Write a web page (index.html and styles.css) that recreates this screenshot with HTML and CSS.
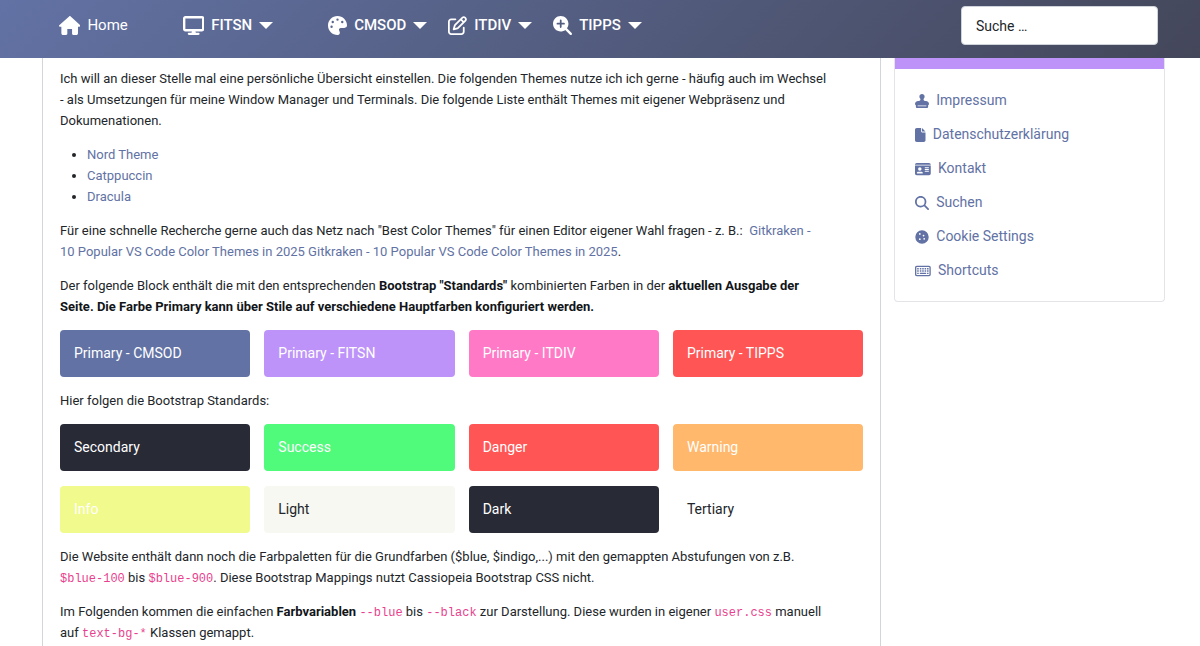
FILE: index.html
```html
<!DOCTYPE html>
<html lang="de">

<head>
    <meta charset="utf-8">
    <meta name="viewport" content="width=device-width, initial-scale=1">
    <title>Color Themes</title>
    <link rel="stylesheet" href="styles.css">
</head>

<body>

    <!-- header start -->
    <header class="header">
        <nav class="nav">
            <a class="nav-item home" href="#">
                <svg class="icon" viewBox="0 0 576 512"><path d="M288 0L6 246c-14 14-4 42 18 42h40v176c0 27 21 48 48 48h80c18 0 32-14 32-32V352h128v128c0 18 14 32 32 32h80c27 0 48-21 48-48V288h40c22 0 32-28 18-42L308 8c-12-11-28-11-40 0z"/></svg>
                Home
            </a>
            <button class="nav-item" type="button">
                <svg class="icon" viewBox="0 0 576 512"><path fill-rule="evenodd" d="M64 0C28.700 0 0 28.700 0 64v288c0 35.300 28.700 64 64 64h176l-10.700 32H160c-17.700 0-32 14.300-32 32s14.300 32 32 32h256c17.700 0 32-14.300 32-32s-14.300-32-32-32h-69.300L336 416h176c35.300 0 64-28.700 64-64V64c0-35.300-28.700-64-64-64H64zm448 64v288H64V64h448z"/></svg>
                FITSN
                <svg class="caret" viewBox="0 0 14 7"><path d="M0 0h14L7 7z"/></svg>
            </button>
            <div class="nav-group">
                <button class="nav-item" type="button">
                    <svg class="icon" viewBox="0 0 512 512"><path fill-rule="evenodd" d="M512 256v2.700c-.4 36.500-33.600 61.300-70.100 61.300H344c-26.500 0-48 21.500-48 48 0 3.400.4 6.700 1 9.900 2.100 10.200 6.500 20 10.800 29.900 6.100 13.800 12.100 27.500 12.100 42 0 31.800-21.600 60.700-53.400 62-3.500.1-7 .2-10.600.2C114.600 512 0 397.400 0 256S114.600 0 256 0s256 114.600 256 256zM128 288a32 32 0 1 0-64 0 32 32 0 1 0 64 0zm0-96a32 32 0 1 0 0-64 32 32 0 1 0 0 64zm160-96a32 32 0 1 0-64 0 32 32 0 1 0 64 0zm96 96a32 32 0 1 0 0-64 32 32 0 1 0 0 64z"/></svg>
                    CMSOD
                    <svg class="caret" viewBox="0 0 14 7"><path d="M0 0h14L7 7z"/></svg>
                </button>
                <button class="nav-item" type="button">
                    <svg class="icon" viewBox="0 0 512 512"><path d="M441 58.900L453.100 71c9.400 9.400 9.400 24.600 0 33.900L424 134.100 377.900 88 407 58.900c9.400-9.400 24.600-9.400 33.900 0zM209.800 256.200L344 121.900 390.100 168 255.800 302.200c-2.900 2.900-6.500 5-10.400 6.100l-58.500 16.700 16.700-58.500c1.100-3.900 3.200-7.500 6.100-10.400zM373.100 25L175.800 222.200c-8.700 8.700-15 19.400-18.300 31.100l-28.600 100c-2.400 8.400-.1 17.400 6.100 23.600s15.200 8.500 23.600 6.100l100-28.600c11.800-3.400 22.500-9.700 31.100-18.300L487 138.900c28.100-28.100 28.100-73.700 0-101.800L474.900 25C446.800-3.100 401.200-3.100 373.100 25zM88 64C39.400 64 0 103.400 0 152v272c0 48.600 39.400 88 88 88h272c48.600 0 88-39.400 88-88V312c0-13.300-10.700-24-24-24s-24 10.700-24 24v112c0 22.100-17.900 40-40 40H88c-22.100 0-40-17.900-40-40V152c0-22.100 17.900-40 40-40h112c13.300 0 24-10.700 24-24s-10.700-24-24-24H88z"/></svg>
                    ITDIV
                    <svg class="caret" viewBox="0 0 14 7"><path d="M0 0h14L7 7z"/></svg>
                </button>
                <button class="nav-item" type="button">
                    <svg class="icon" viewBox="0 0 512 512"><path fill-rule="evenodd" d="M416 208c0 45.900-14.900 88.300-40 122.700l126.600 126.700c12.500 12.500 12.500 32.800 0 45.300s-32.800 12.500-45.300 0L330.700 376c-34.400 25.200-76.800 40-122.700 40C93.100 416 0 322.900 0 208S93.100 0 208 0s208 93.100 208 208zM184 296c0 13.300 10.700 24 24 24s24-10.700 24-24v-64h64c13.300 0 24-10.700 24-24s-10.700-24-24-24h-64v-64c0-13.300-10.700-24-24-24s-24 10.700-24 24v64h-64c-13.300 0-24 10.700-24 24s10.700 24 24 24h64v64z"/></svg>
                    TIPPS
                    <svg class="caret" viewBox="0 0 14 7"><path d="M0 0h14L7 7z"/></svg>
                </button>
            </div>
        </nav>
        <form class="search" role="search">
            <input class="search-input" type="search" placeholder="Suche …" aria-label="Suche">
        </form>
    </header>
    <!-- header end -->

    <div class="page">
        <main class="content">
            <p>Ich will an dieser Stelle mal eine persönliche Übersicht einstellen. Die folgenden Themes nutze ich ich gerne - häufig auch im Wechsel<br>
            - als Umsetzungen für meine Window Manager und Terminals. Die folgende Liste enthält Themes mit eigener Webpräsenz und<br>
            Dokumenationen.</p>
            <ul>
                <li><a href="#">Nord Theme</a></li>
                <li><a href="#">Catppuccin</a></li>
                <li><a href="#">Dracula</a></li>
            </ul>
            <p>Für eine schnelle Recherche gerne auch das Netz nach "Best Color Themes" für einen Editor eigener Wahl fragen - z. B.:&nbsp; <a href="#">Gitkraken -<br>
            10 Popular VS Code Color Themes in 2025 Gitkraken - 10 Popular VS Code Color Themes in 2025</a>.</p>
            <p>Der folgende Block enthält die mit den entsprechenden <strong>Bootstrap "Standards"</strong> kombinierten Farben in der <strong>aktuellen Ausgabe der<br>
            Seite. Die Farbe Primary kann über Stile auf verschiedene Hauptfarben konfiguriert werden.</strong></p>

            <div class="swatches">
                <div class="swatch cmsod">Primary - CMSOD</div>
                <div class="swatch fitsn">Primary - FITSN</div>
                <div class="swatch itdiv">Primary - ITDIV</div>
                <div class="swatch tipps">Primary - TIPPS</div>
            </div>

            <p>Hier folgen die Bootstrap Standards:</p>

            <div class="swatches">
                <div class="swatch secondary">Secondary</div>
                <div class="swatch success">Success</div>
                <div class="swatch danger">Danger</div>
                <div class="swatch warning">Warning</div>
                <div class="swatch info">Info</div>
                <div class="swatch light">Light</div>
                <div class="swatch dark">Dark</div>
                <div class="swatch tertiary">Tertiary</div>
            </div>

            <p>Die Website enthält dann noch die Farbpaletten für die Grundfarben ($blue, $indigo,...) mit den gemappten Abstufungen von z.B.<br>
            <code>$blue-100</code> bis <code>$blue-900</code>. Diese Bootstrap Mappings nutzt Cassiopeia Bootstrap CSS nicht.</p>
            <p>Im Folgenden kommen die einfachen <strong>Farbvariablen</strong> <code>--blue</code> bis <code>--black</code> zur Darstellung. Diese wurden in eigener <code>user.css</code> manuell<br>
            auf <code>text-bg-*</code> Klassen gemappt.</p>
        </main>

        <aside class="card">
            <div class="card-top"></div>
            <ul class="card-menu">
                <li><a href="#">
                    <svg class="icon" viewBox="0 0 512 512"><path fill-rule="evenodd" d="M312 201.800c0-17.400 9.200-33.200 19.900-47C344.500 138.500 352 118.100 352 96c0-53-43-96-96-96s-96 43-96 96c0 22.100 7.500 42.500 20.100 58.800 10.700 13.800 19.900 29.600 19.900 47 0 29.900-24.300 54.200-54.200 54.200H112C50.100 256 0 306.100 0 368c0 20.900 13.400 38.700 32 45.300V464c0 26.500 21.500 48 48 48h352c26.500 0 48-21.500 48-48v-50.700c18.600-6.600 32-24.400 32-45.300 0-61.900-50.100-112-112-112h-33.800c-29.900 0-54.200-24.300-54.200-54.200zM416 416v32H96v-32h320z"/></svg>
                    Impressum</a></li>
                <li><a href="#">
                    <svg class="icon" viewBox="0 0 384 512"><path d="M0 64C0 28.700 28.700 0 64 0h160v128c0 17.700 14.300 32 32 32h128v288c0 35.300-28.700 64-64 64H64c-35.300 0-64-28.700-64-64V64zm384 64H256V0l128 128z"/></svg>
                    Datenschutzerklärung</a></li>
                <li><a href="#">
                    <svg class="icon" viewBox="0 0 576 512"><path fill-rule="evenodd" d="M0 96h576c0-35.300-28.700-64-64-64H64C28.700 32 0 60.700 0 96zm0 32v288c0 35.300 28.700 64 64 64h448c35.300 0 64-28.700 64-64V128H0zm64 277.300C64 375.900 87.900 352 117.300 352h117.400c29.400 0 53.300 23.900 53.300 53.300 0 5.900-4.800 10.700-10.700 10.700H74.700c-5.900 0-10.700-4.800-10.700-10.700zM176 192a64 64 0 1 1 0 128 64 64 0 1 1 0-128zm176 16c0-8.800 7.200-16 16-16h128c8.800 0 16 7.200 16 16s-7.200 16-16 16H368c-8.800 0-16-7.200-16-16zm0 64c0-8.800 7.200-16 16-16h128c8.800 0 16 7.200 16 16s-7.200 16-16 16H368c-8.800 0-16-7.200-16-16zm0 64c0-8.800 7.200-16 16-16h128c8.800 0 16 7.200 16 16s-7.200 16-16 16H368c-8.800 0-16-7.200-16-16z"/></svg>
                    Kontakt</a></li>
                <li><a href="#">
                    <svg class="icon" viewBox="0 0 512 512"><path fill-rule="evenodd" d="M416 208c0 45.900-14.900 88.300-40 122.700l126.600 126.700c12.500 12.500 12.500 32.800 0 45.300s-32.800 12.500-45.300 0L330.700 376c-34.400 25.200-76.800 40-122.700 40C93.100 416 0 322.900 0 208S93.100 0 208 0s208 93.100 208 208zM208 352a144 144 0 1 0 0-288 144 144 0 1 0 0 288z"/></svg>
                    Suchen</a></li>
                <li><a href="#">
                    <svg class="icon" viewBox="0 0 512 512"><path fill-rule="evenodd" d="M256 10a246 246 0 1 0 0 492 246 246 0 1 0 0-492zM208 144a32 32 0 1 0-64 0 32 32 0 1 0 64 0zm-32 224a32 32 0 1 0 0-64 32 32 0 1 0 0 64zm192-48a32 32 0 1 0-64 0 32 32 0 1 0 64 0zM312 236a32 32 0 1 0 0-64 32 32 0 1 0 0 64z"/></svg>
                    Cookie Settings</a></li>
                <li><a href="#">
                    <svg class="icon" viewBox="0 0 576 512"><path fill-rule="evenodd" d="M64 64C28.700 64 0 92.700 0 128v256c0 35.300 28.700 64 64 64h448c35.300 0 64-28.700 64-64V128c0-35.300-28.700-64-64-64H64zm0 48h448c9 0 16 7 16 16v256c0 9-7 16-16 16H64c-9 0-16-7-16-16V128c0-9 7-16 16-16z"/><path d="M80 144h56v56H80zM176 144h56v56h-56zM264 144h56v56h-56zM352 144h56v56h-56zM440 144h56v56h-56zM80 228h56v56H80zM176 228h56v56h-56zM264 228h56v56h-56zM352 228h56v56h-56zM440 228h56v56h-56zM80 316h56v52H80zM176 316h232v52H176zM440 316h56v52h-56z"/></svg>
                    Shortcuts</a></li>
            </ul>
        </aside>
    </div>

</body>

</html>
```
FILE: styles.css
```css
* {
    box-sizing: border-box;
    margin: 0;
    padding: 0;
}

body {
    display: flex;
    flex-direction: column;
    min-height: 100vh;
    background: #fff;
    color: #22262a;
    font-family: Roboto, "Liberation Sans", sans-serif;
    font-size: 14px;
    line-height: 21px;
}

a {
    color: #6272a4;
    text-decoration: none;
}

ul {
    list-style: none;
}

.icon {
    height: 14px;
    fill: currentColor;
}

/* header */
.header {
    position: sticky;
    top: 0;
    display: flex;
    justify-content: space-between;
    align-items: center;
    height: 58px;
    padding: 0 42px 7px 59px;
    background: linear-gradient(135deg, #6272a4, #44475a);
}

.nav,
.nav-group {
    display: flex;
    align-items: center;
}

.nav {
    gap: 55px;
}

.nav-group {
    gap: 21px;
}

.nav-item {
    display: flex;
    align-items: center;
    gap: 7px;
    border: 0;
    background: none;
    color: #fff;
    font-family: inherit;
    font-size: 15px;
    font-weight: 500;
    line-height: 21px;
    cursor: pointer;
}

.nav-item .icon {
    height: 19px;
}

.home {
    font-weight: 400;
}

.caret {
    width: 14px;
    height: 7px;
    fill: currentColor;
}

.search-input {
    width: 197px;
    height: 39px;
    padding: 0 14px;
    border: 1px solid #ced4da;
    border-radius: 4px;
    background: #fff;
    color: #22262a;
    font-family: inherit;
    font-size: 14px;
}

.search-input::placeholder {
    color: #22262a;
    opacity: 1;
}

/* page */
.page {
    flex: 1;
    display: grid;
    grid-template-columns: 31fr 10fr;
    gap: 13px;
    padding: 0 35px 0 42px;
}

.content {
    padding: 10px 17px 0;
    border: solid #d3d5d9;
    border-width: 0 1px;
}

.content p,
.content ul {
    margin-bottom: 13px;
    font-size: 13px;
}

.content ul {
    padding-left: 27px;
    list-style: disc;
}

.content p:last-child {
    margin-bottom: 0;
}

strong {
    color: #121519;
    font-weight: 700;
}

code {
    color: #e93f8e;
    font-family: "Liberation Mono", monospace;
    font-size: 12px;
    line-height: 1;
}

/* colour boxes */
.swatches {
    display: grid;
    grid-template-columns: repeat(4, 1fr);
    gap: 15px 14px;
    margin-bottom: 13px;
}

.swatch {
    padding: 13px 14px;
    border-radius: 4px;
    color: #fff;
}

.cmsod {
    background: #6272a4;
}

.fitsn {
    background: #bd93f9;
}

.itdiv {
    background: #ff79c6;
}

.tipps,
.danger {
    background: #ff5555;
}

.secondary,
.dark {
    background: #282a36;
}

.success {
    background: #50fa7b;
}

.warning {
    background: #ffb86c;
}

.info {
    background: #f1fa8c;
}

.light {
    background: #f8f8f2;
    color: #22262a;
}

.tertiary {
    color: #22262a;
}

/* sidebar */
.card {
    align-self: start;
    border: 1px solid #e3e4e8;
    border-top: 0;
    border-radius: 0 0 4px 4px;
}

.card-top {
    height: 11px;
    background: #bd93f9;
}

.card-menu {
    display: flex;
    flex-direction: column;
    gap: 13px;
    padding: 21px 20px 20px;
}

.card-menu a {
    display: flex;
    align-items: center;
    gap: 7px;
}
```
